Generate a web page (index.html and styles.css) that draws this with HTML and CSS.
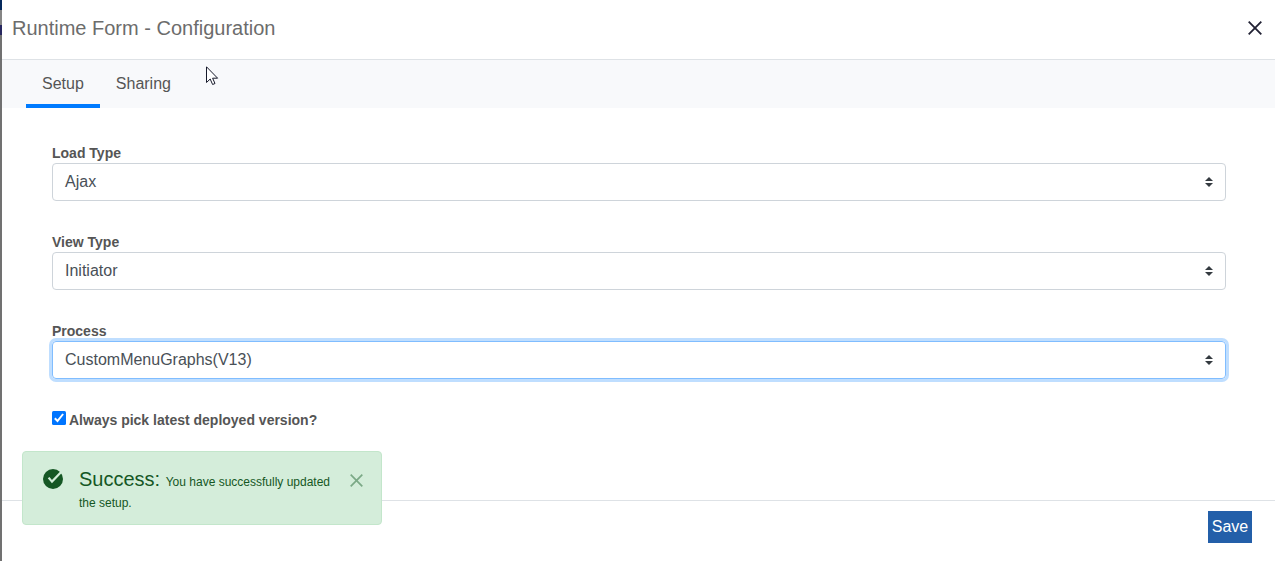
FILE: index.html
```html
<!DOCTYPE html>
<html lang="en">
<head>
    <meta charset="utf-8">
    <title>Runtime Form - Configuration</title>
    <link rel="stylesheet" href="styles.css">
</head>
<body>
    <div class="modal">
        <header class="modal-header">
            <h1>Runtime Form - Configuration</h1>
            <button class="close" aria-label="Close">
                <svg width="14" height="14" viewBox="0 0 14 14"><path d="M.7.7l12.6 12.6M13.3.7L.7 13.3" fill="none" stroke="#212133" stroke-width="1.8"/></svg>
            </button>
        </header>

        <nav class="tabs">
            <a class="tab active">Setup</a>
            <a class="tab">Sharing</a>
        </nav>

        <main class="modal-body">
            <div class="form-group">
                <label>Load Type</label>
                <div class="select">
                    <span>Ajax</span>
                    <svg width="8" height="10" viewBox="0 0 4 5"><path fill="#343a40" d="M2 0L0 2h4zm0 5L0 3h4z"/></svg>
                </div>
            </div>
            <div class="form-group">
                <label>View Type</label>
                <div class="select">
                    <span>Initiator</span>
                    <svg width="8" height="10" viewBox="0 0 4 5"><path fill="#343a40" d="M2 0L0 2h4zm0 5L0 3h4z"/></svg>
                </div>
            </div>
            <div class="form-group">
                <label>Process</label>
                <div class="select focus">
                    <span>CustomMenuGraphs(V13)</span>
                    <svg width="8" height="10" viewBox="0 0 4 5"><path fill="#343a40" d="M2 0L0 2h4zm0 5L0 3h4z"/></svg>
                </div>
            </div>
            <div class="check">
                <svg width="14" height="14" viewBox="0 0 14 14"><rect width="14" height="14" rx="1.5" fill="#0075ff"/><path d="M2.8 7.3l2.7 2.7 5.6-7" fill="none" stroke="#fff" stroke-width="2"/></svg>
                <label>Always pick latest deployed version?</label>
            </div>
        </main>

        <footer class="modal-footer">
            <button class="save">Save</button>
        </footer>
    </div>

    <div class="alert">
        <svg class="alert-icon" width="20" height="20" viewBox="0 0 20 20"><circle cx="10" cy="10" r="10" fill="#155724"/><path d="M5.6 8.6l3.4 4L18.2 3" fill="none" stroke="#d4edda" stroke-width="2.2"/></svg>
        <p class="alert-text"><span class="alert-title">Success: </span>You have successfully updated the setup.</p>
        <svg class="alert-close" width="13" height="13" viewBox="0 0 13 13"><path d="M.7.7l11.6 11.6M12.3.7L.7 12.3" fill="none" stroke="#7ba986" stroke-width="1.7"/></svg>
    </div>

    <svg class="cursor" width="13" height="21" viewBox="0 0 13 21"><path d="M.5.8v15.7l3.7-3.5 2.4 5.5 2.4-1-2.4-5.3h5z" fill="#fff" stroke="#171a2b"/></svg>
</body>
</html>
```

FILE: styles.css
```css
* {
    box-sizing: border-box;
}
body {
    margin: 0;
    height: 561px;
    padding-left: 2px;
    overflow: hidden;
    font-family: "Liberation Sans", Arial, sans-serif;
    font-size: 16px;
    color: #495057;
    background: linear-gradient(#05295c 0 10px, #858585 10px 25px, #27275f 25px 35px, #717171 35px);
}
button {
    border: 0;
    padding: 0;
    font-family: inherit;
}
.modal {
    height: 561px;
    background: #fff;
    display: flex;
    flex-direction: column;
}
.modal-header {
    height: 60px;
    padding: 0 13px 3px 10px;
    border-bottom: 1px solid #dee2e6;
    display: flex;
    align-items: center;
    justify-content: space-between;
}
.modal-header h1 {
    margin: 0;
    font-size: 20px;
    font-weight: normal;
    color: #6c6c6c;
}
.close {
    display: flex;
    background: none;
}
.tabs {
    height: 48px;
    padding-left: 24px;
    background: #f8f9fb;
    display: flex;
}
.tab {
    padding: 0 16px;
    line-height: 48px;
    color: #555;
}
.tab.active {
    border-bottom: 4px solid #007bff;
}
.modal-body {
    flex: 1;
    padding: 36px 49px 0 50px;
}
.form-group {
    margin-bottom: 32px;
}
label {
    display: block;
    margin-bottom: 1px;
    font-size: 14px;
    font-weight: bold;
    line-height: 18px;
    color: #555;
}
.select {
    height: 38px;
    padding: 0 12px;
    border: 1px solid #ced4da;
    border-radius: 4px;
    display: flex;
    align-items: center;
    justify-content: space-between;
}
.select.focus {
    border-color: #80bdff;
    box-shadow: 0 0 0 3px #bfdeff;
}
.check {
    display: flex;
    gap: 3px;
}
.modal-footer {
    height: 61px;
    padding: 10px 23px 0 0;
    border-top: 1px solid #dee2e6;
    text-align: right;
}
.save {
    width: 44px;
    height: 32px;
    font-size: 16px;
    color: #fff;
    background: #235fa9;
}
.alert {
    position: absolute;
    left: 22px;
    top: 451px;
    width: 360px;
    height: 74px;
    padding: 17px 18px 0 20px;
    border: 1px solid #c3e6cb;
    border-radius: 4px;
    display: flex;
    color: #155724;
    background: #d4edda;
}
.alert-icon {
    flex: none;
    margin-right: 16px;
}
.alert-text {
    flex: 1;
    margin: 0;
    padding-right: 18px;
    font-size: 12px;
    line-height: 21px;
}
.alert-title {
    font-size: 20px;
}
.alert-close {
    flex: none;
    margin-top: 5px;
}
.cursor {
    position: absolute;
    left: 206px;
    top: 66px;
}
```
